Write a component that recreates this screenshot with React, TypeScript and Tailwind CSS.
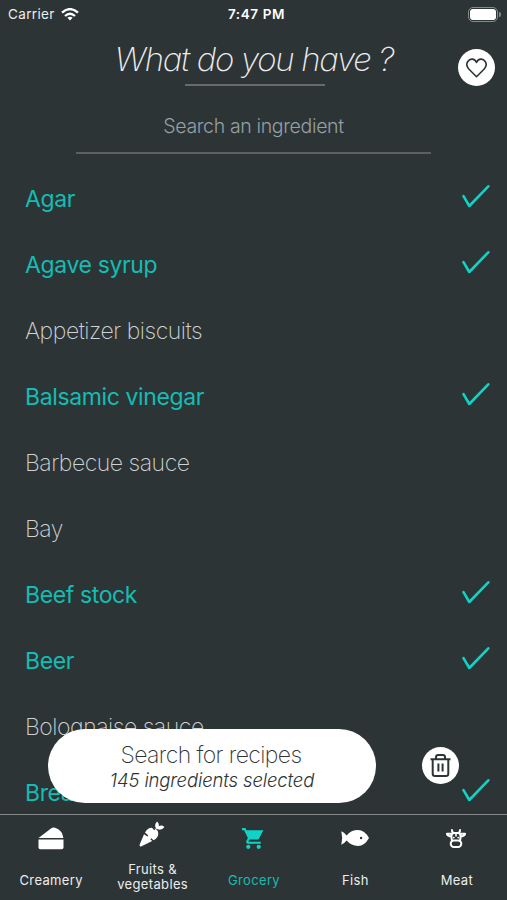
import type { ReactNode } from "react";

interface Ingredient {
  name: string;
  selected: boolean;
}

const ingredients: Ingredient[] = [
  { name: "Agar", selected: true },
  { name: "Agave syrup", selected: true },
  { name: "Appetizer biscuits", selected: false },
  { name: "Balsamic vinegar", selected: true },
  { name: "Barbecue sauce", selected: false },
  { name: "Bay", selected: false },
  { name: "Beef stock", selected: true },
  { name: "Beer", selected: true },
  { name: "Bolognaise sauce", selected: false },
  { name: "Bread", selected: true },
];

function CheckIcon() {
  return (
    <svg width="28" height="24" viewBox="0 0 28 24" fill="none" stroke="#10d3c8" strokeWidth="2.6" strokeLinecap="round" strokeLinejoin="round">
      <path d="M1.5 12.2 7.3 22 26.3 2.3" />
    </svg>
  );
}

function CakeIcon() {
  return (
    <svg width="26" height="23" viewBox="0 0 26 23" fill="currentColor">
      <path d="M.5 11 13.3 1.2Q15 .2 17 .8 24.5 3.4 25.4 11ZM.5 12.6h25v7.9q0 1.8-1.8 1.8H2.3q-1.8 0-1.8-1.8Z" />
    </svg>
  );
}

function CarrotIcon() {
  return (
    <svg width="26" height="26" viewBox="0 0 26 26" fill="currentColor">
      <path d="M1 25.3Q.2 24.6.8 23.3L5 13.2 8.4 15.5 9.3 14.5 6 11.5Q8.6 6.6 13 6.8L15.2 9.2 16.3 8.3 15 7.1Q19.3 8.6 19.3 12.8 19 17.2 14.6 19.3L12.3 17.3 11.3 18.3 13.2 20.1 2.5 25.2Q1.5 25.7 1 25.3Z" />
      <path d="M17.1 7.8Q14.7 3.7 18.1.5 20.3 2 19.9 5.1 22.9 3.6 25.4 6 22.6 10.1 17.1 7.8Z" />
    </svg>
  );
}

function CartIcon() {
  return (
    <svg width="25" height="25" viewBox="0 0 24 24" fill="currentColor">
      <path d="M7 18c-1.1 0-1.99.9-1.99 2S5.9 22 7 22s2-.9 2-2-.9-2-2-2ZM1 2v2h2l3.6 7.59-1.35 2.45c-.16.28-.25.61-.25.96 0 1.1.9 2 2 2h12v-2H7.42a.25.25 0 0 1-.22-.37L8.1 13h7.45c.75 0 1.41-.41 1.75-1.03L21.5 4H5.21l-.94-2H1Zm16 16c-1.1 0-1.99.9-1.99 2s.89 2 1.99 2 2-.9 2-2-.9-2-2-2Z" />
    </svg>
  );
}

function FishIcon() {
  return (
    <svg width="28" height="16" viewBox="0 0 28 16" fill="currentColor">
      <path fillRule="evenodd" d="M.3 1.2Q3 2.1 5.6 5.4 10.2 0 17 0 23.5 0 28 8 23.5 16 17 16 10.2 16 5.6 10.6 3 13.9.3 14.8L1.2 8ZM20.1 6.8a1.2 1.2 0 1 0 0 2.4 1.2 1.2 0 0 0 0-2.4Z" />
    </svg>
  );
}

function CowIcon() {
  return (
    <svg width="20" height="19" viewBox="0 0 20 19" fill="none" stroke="currentColor" strokeWidth="2" strokeLinejoin="round">
      <path d="M6.1.3Q5.5 2.5 7.3 4H12.7Q14.5 2.5 13.9.3" />
      <path d="M5.9 4.7H.9Q1.8 7.4 5.4 7.3M14.1 4.7h5Q18.2 7.4 14.6 7.3" />
      <path d="M7.3 4Q5.3 4.7 5.4 8L6 12M12.7 4q2 .7 1.9 4L14 12" />
      <rect x="4.7" y="11.6" width="10.6" height="6.4" rx="3.2" />
      <path d="M10 4.5V7.5" strokeWidth="1.6" />
      <circle cx="7.8" cy="8.6" r=".9" fill="currentColor" stroke="none" />
      <circle cx="12.2" cy="8.6" r=".9" fill="currentColor" stroke="none" />
    </svg>
  );
}

function TabItem({ icon, label, active, tall }: { icon: ReactNode; label: string; active?: boolean; tall?: boolean }) {
  return (
    <div className={`flex flex-1 flex-col items-center ${tall ? "pt-[5px]" : "pt-[9px]"} ${active ? "text-[#10d3c8]" : "text-white"}`}>
      <div className="flex h-7 items-center justify-center">{icon}</div>
      <div
        className={`mt-2.5 flex h-[38px] w-20 items-center justify-center pl-px text-center text-[13px] leading-[15.5px] tracking-[0.35px] ${
          active ? "text-[#13bdb4]" : "text-[#eceded]"
        }`}
      >
        {label}
      </div>
    </div>
  );
}

export default function App() {
  return (
    <div className="relative flex h-[900px] w-[507px] flex-col overflow-hidden bg-[#2d3436] font-['Inter',sans-serif] text-white">
      <div className="grid h-7 shrink-0 grid-cols-3 items-center pr-1.5 pl-2 text-[13.5px]">
        <div className="flex items-center gap-1.5 text-[#eceded]">
          <span className="tracking-[0.35px]">Carrier</span>
          <svg width="18" height="13" viewBox="0 0 18 13" fill="none" stroke="white" strokeWidth="2.3">
            <path d="M1 4.7Q9-2.5 17 4.7M4 8Q9 3.5 14 8" />
            <path d="M6.4 9.8Q9 7.6 11.6 9.8L9 12.5Z" fill="white" stroke="none" />
          </svg>
        </div>
        <div className="pl-1 text-center font-semibold tracking-[0.6px]">7:47 PM</div>
        <div className="flex items-center justify-end gap-px">
          <div className="h-[15px] w-[30px] rounded-[5px] border border-[#858a8b] p-px">
            <div className="h-full rounded-[3px] bg-white" />
          </div>
          <div className="h-[5px] w-[2px] rounded-r bg-[#858a8b]" />
        </div>
      </div>

      <header className="relative flex h-[126px] shrink-0 flex-col items-center">
        <h1 className="mt-2.5 h-[42px] pl-px text-[33px] leading-[42px] font-extralight tracking-[-1.3px] whitespace-nowrap text-[#eceded] italic">
          What do you have ?
        </h1>
        <div className="mt-1 h-0.5 w-[140px] shrink-0 translate-x-px bg-[#666c6d]" />
        <div className="mt-6 h-8 text-[19.5px] leading-8 font-light tracking-[-0.35px] text-[#94a0a3]">Search an ingredient</div>
        <div className="mt-2.5 h-0.5 w-[355px] shrink-0 bg-[#5b6162]" />
        <button className="absolute top-[21px] right-3 flex size-[37px] items-center justify-center rounded-full bg-white">
          <svg width="21" height="20" viewBox="0 0 21 20" fill="none" stroke="#2d3436" strokeWidth="1.6" strokeLinejoin="round">
            <path d="M10.5 18.7 2.8 11Q-.6 7.2 1.8 3.5C4 .1 8.6.3 10.5 4.4 12.4.3 17 .1 19.2 3.5Q21.6 7.2 18.2 11Z" />
          </svg>
        </button>
      </header>

      <div className="mt-3 h-[648px] shrink-0 overflow-hidden">
        {ingredients.map((item) => (
          <div key={item.name} className="flex h-[66px] items-center justify-between pr-[17px] pl-[25px]">
            <span
              className={`pt-px text-[23px] whitespace-nowrap ${
                item.selected
                  ? "font-normal tracking-[-0.38px] text-[#13bdb4]"
                  : "font-extralight tracking-[-0.47px] text-[#d0d3d3]"
              }`}
            >
              {item.name}
            </span>
            {item.selected && (
              <div className="-mt-1.5">
                <CheckIcon />
              </div>
            )}
          </div>
        ))}
      </div>

      <button className="absolute top-[729px] left-12 flex h-[74px] w-[328px] flex-col items-center rounded-full bg-white pt-3">
        <span className="pr-0.5 text-[23px] leading-7 font-extralight tracking-[-0.6px] text-[#2d3436]">Search for recipes</span>
        <span className="text-[18.5px] leading-[22px] font-light tracking-[-0.13px] text-[#2d3436] italic">145 ingredients selected</span>
      </button>
      <button className="absolute top-[747px] left-[422px] flex size-[37px] items-center justify-center rounded-full bg-white">
        <svg width="21" height="23" viewBox="0 0 21 23" fill="none" stroke="#2d3436" strokeWidth="2">
          <path d="M.5 5.2h20M6 5V3.2Q6 1 8.2 1h4.6Q15 1 15 3.2V5M2.7 5.5v14.2q0 2.3 2.3 2.3h11q2.3 0 2.3-2.3V5.5M8.4 9.5v8M12.6 9.5v8" />
        </svg>
      </button>

      <nav className="flex h-[86px] shrink-0 border-t border-[#85898a] bg-[#2d3436]">
        <TabItem icon={<CakeIcon />} label="Creamery" />
        <TabItem icon={<CarrotIcon />} label="Fruits & vegetables" tall />
        <TabItem icon={<CartIcon />} label="Grocery" active />
        <TabItem icon={<FishIcon />} label="Fish" />
        <TabItem icon={<CowIcon />} label="Meat" />
      </nav>
    </div>
  );
}
